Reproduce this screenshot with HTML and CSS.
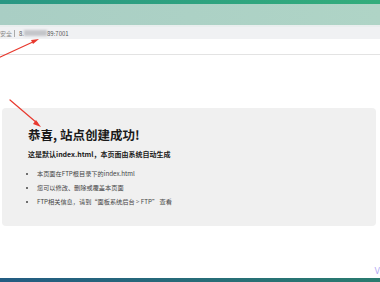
FILE: index.html
```html
<!DOCTYPE html>
<html lang="zh">
<head>
<meta charset="utf-8">
<link rel="stylesheet" href="styles.css">
</head>
<body>
<div class="screen">
  <div class="top-band"></div>
  <div class="tint-band"></div>
  <div class="sep"></div>
  <div class="addr">
    <span class="secure">安全</span>
    <span class="pipe"></span>
    <span class="host">8.</span><span class="blur"></span><span class="host">89:7001</span>
  </div>
  <div class="blank"></div>
  <div class="rule"></div>
  <main class="content">
    <section class="card">
      <h1 class="title">恭喜, 站点创建成功!</h1>
      <h3 class="sub">这是默认index.html，本页面由系统自动生成</h3>
      <ul class="list">
        <li>本页面在FTP根目录下的index.html</li>
        <li>您可以修改、删除或覆盖本页面</li>
        <li>FTP相关信息，请到“面板系统后台 &gt; FTP” 查看</li>
      </ul>
    </section>
  </main>
  <div class="bottom-bar"></div>
  <span class="corner-glyph">V</span>
  <svg class="arrows" width="380" height="282" viewBox="0 0 380 282">
    <g stroke="#e8392e" stroke-width="1.2" fill="#e8392e" stroke-linecap="round">
      <line x1="-2" y1="58" x2="35" y2="41"/>
      <polygon points="39,39 31,40 33,44" stroke="none"/>
      <line x1="10" y1="100" x2="37" y2="123"/>
      <polygon points="41,127 33,124 36,120" stroke="none"/>
    </g>
  </svg>
</div>
</body>
</html>
```

FILE: styles.css
```css
html, body {
  margin: 0;
  padding: 0;
  background: #ffffff;
}
.screen {
  position: relative;
  width: 380px;
  height: 282px;
  overflow: hidden;
  display: flex;
  flex-direction: column;
  font-family: "Noto Sans CJK SC", "Noto Sans", sans-serif;
}
.top-band {
  height: 4px;
  background: linear-gradient(90deg, #2a9784, #33ad7c);
  flex: none;
}
.tint-band {
  height: 21px;
  background: linear-gradient(90deg, #a9cec4, #afd4c6);
  flex: none;
}
.sep {
  height: 2px;
  background: #e9eeee;
  flex: none;
}
.addr {
  height: 12px;
  background: #f0f1f3;
  display: flex;
  align-items: center;
  font-size: 6px;
  color: #777;
  flex: none;
  padding-left: 0;
}
.secure {
  color: #888;
}
.pipe {
  width: 1px;
  height: 7px;
  background: #aaa;
  margin: 0 4px 0 2px;
}
.host {
  color: #555;
}
.blur {
  display: inline-block;
  width: 23px;
  height: 6px;
  background: #c4c6ca;
  filter: blur(1.2px);
}
.blank {
  height: 15px;
  flex: none;
}
.rule {
  height: 1px;
  background: #e3e3e3;
  flex: none;
}
.content {
  flex: 1;
  padding: 53px 4px 0 2px;
}
.card {
  height: 118px;
  background: #f0f0f0;
  border-radius: 4px;
  padding: 19px 0 0 26px;
  box-sizing: border-box;
}
.title {
  margin: 0;
  font-size: 12.5px;
  line-height: 16px;
  font-weight: 700;
  color: #1a1a1a;
}
.sub {
  margin: 7px 0 0 0;
  font-size: 7px;
  line-height: 9px;
  font-weight: 700;
  color: #1a1a1a;
}
.list {
  margin: 11px 0 0 0;
  padding: 0 0 0 9px;
  font-size: 6.2px;
  line-height: 8px;
  color: #444;
}
.list li {
  margin-bottom: 6px;
}
.list li::marker {
  font-size: 6px;
}
.bottom-bar {
  height: 4px;
  flex: none;
  background: linear-gradient(90deg, #235c82, #2a7b6f);
}
.corner-glyph {
  position: absolute;
  right: 0;
  bottom: 6px;
  font-size: 8px;
  line-height: 9px;
  color: #b2a9f4;
  font-family: "DejaVu Sans", sans-serif;
}
.arrows {
  position: absolute;
  left: 0;
  top: 0;
  pointer-events: none;
}
```
